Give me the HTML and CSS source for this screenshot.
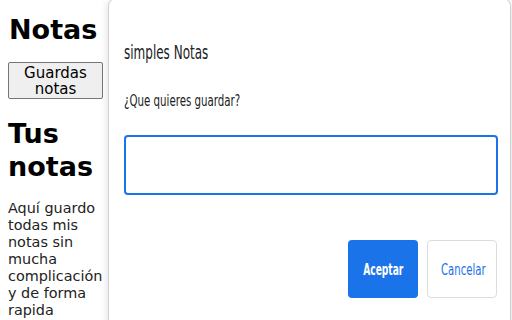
FILE: index.html
```html
<!DOCTYPE html>
<html lang="es">
<head>
    <meta charset="UTF-8">
    <meta name="viewport" content="width=device-width, initial-scale=1.0">
    <title>simples Notas</title>
    <link rel="stylesheet" href="styles.css">
</head>
<body>

<div class="page">
    <h1>Notas</h1>
    <button class="save-btn">Guardas notas</button>
    <h2>Tus notas</h2>
    <p class="intro">Aquí guardo todas mis notas sin mucha complicación y de forma rapida</p>
</div>

<!-- Prompt dialog -->
<div class="dialog">
    <div class="dialog-title"><span class="narrow">simples Notas</span></div>
    <div class="dialog-msg"><span class="narrow">¿Que quieres guardar?</span></div>
    <input type="text" class="dialog-input">
    <div class="dialog-buttons">
        <button class="btn btn-ok"><span class="narrow">Aceptar</span></button>
        <button class="btn btn-cancel"><span class="narrow">Cancelar</span></button>
    </div>
</div>

</body>
</html>
```

FILE: styles.css
```css
body {
    margin: 0;
    padding: 0;
    background-color: #fff;
    font-family: "DejaVu Sans", Verdana, sans-serif;
    overflow: hidden;
    height: 320px;
}

.page {
    width: 100px;
    padding: 0 0 0 8px;
}

h1 {
    font-size: 27px;
    line-height: 32px;
    font-weight: bold;
    margin: 14px 0 16px 1px;
    color: #000;
}

.save-btn {
    width: 95px;
    height: 37px;
    padding: 0;
    font-family: "DejaVu Sans", Verdana, sans-serif;
    font-size: 15px;
    line-height: 16px;
    color: #000;
    background-color: #efefef;
    border: 1px solid #767676;
    border-radius: 2px;
}

h2 {
    font-size: 27px;
    line-height: 33px;
    font-weight: bold;
    margin: 18px 0 17px 0;
    color: #000;
}

.intro {
    font-size: 14.4px;
    line-height: 17px;
    margin: 0;
    color: #222;
}

.dialog {
    position: absolute;
    left: 108px;
    top: -2px;
    width: 386px;
    height: 340px;
    padding: 0 0 0 15px;
    background-color: #fff;
    border: 1px solid #d0d0d0;
    border-radius: 8px;
    box-shadow: 0 2px 8px rgba(0, 0, 0, 0.15);
    font-family: "DejaVu Sans", sans-serif;
}

/* the screenshot text is squeezed sideways */
.narrow {
    display: inline-block;
    transform: scaleX(0.6);
    transform-origin: left center;
    white-space: nowrap;
}

.dialog-title {
    margin-top: 41px;
    font-size: 20px;
    color: #202124;
}

.dialog-msg {
    margin-top: 27px;
    font-size: 16px;
    color: #202124;
}

.dialog-msg .narrow {
    transform: scaleX(0.64);
}

.dialog-input {
    display: block;
    margin-top: 25px;
    width: 374px;
    height: 60px;
    box-sizing: border-box;
    border: 2px solid #1a73e8;
    border-radius: 4px;
    outline: none;
}

.dialog-buttons {
    display: flex;
    justify-content: flex-end;
    gap: 9px;
    width: 373px;
    margin-top: 45px;
}

.btn {
    width: 70px;
    height: 58px;
    padding: 0;
    border-radius: 4px;
    font-family: "DejaVu Sans", sans-serif;
    font-size: 16px;
    cursor: pointer;
}

.btn .narrow {
    transform-origin: center center;
}

.btn-ok {
    background-color: #1a73e8;
    color: #fff;
    border: none;
    font-weight: 600;
}

.btn-ok .narrow {
    transform: scaleX(0.57);
}

.btn-cancel {
    background-color: #fff;
    color: #1a73e8;
    border: 1px solid #dadce0;
}

.btn-cancel .narrow {
    transform: scaleX(0.63);
}
```
